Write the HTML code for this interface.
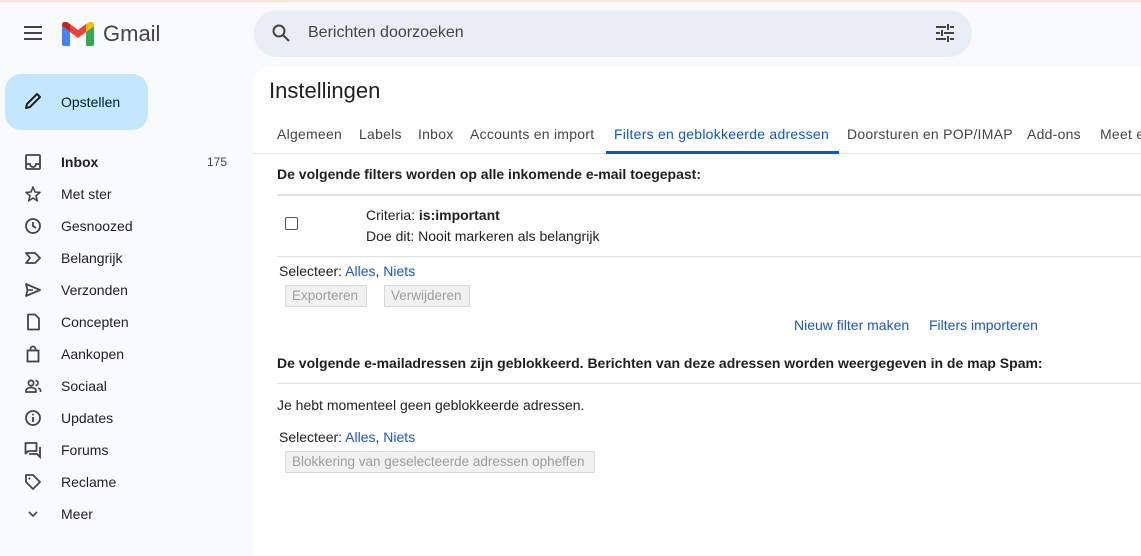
<!DOCTYPE html>
<html><head><meta charset="utf-8"><style>
*{margin:0;padding:0;box-sizing:border-box}
body{width:1141px;height:546px;overflow:hidden;background:#f8fafd;font-family:"Liberation Sans",Arial,sans-serif;color:#1f1f1f;position:relative}
.a{position:absolute;white-space:nowrap}
.nav{font-size:14px;color:#1f1f1f}
.ic{position:absolute;left:24px;width:18px;height:18px}
.tab{font-size:14px;color:#444;top:126px;letter-spacing:0.25px}
.btn{position:absolute;border:1px solid #d6d6d6;background:#f1f1f1;color:#9e9e9e;font-size:13.5px;border-radius:2px;padding:2px 6px;height:22px}
a,.lk{color:#1a57c8;text-decoration:none}
.s13{font-size:14px}
</style></head><body>
<div class="a" style="left:0;top:0;width:1141px;height:2px;background:#fbe6da"></div>
<svg class="a" style="left:23px;top:25px" width="20" height="16" viewBox="0 0 20 16"><path d="M1 2h18M1 8h18M1 14h18" stroke="#444" stroke-width="2"/></svg>
<svg class="a" style="left:62px;top:22px" width="32" height="24" viewBox="0 0 32 24">
<path d="M2 24h6V10L0 4v18a2 2 0 0 0 2 2z" fill="#4285f4"/>
<path d="M24 24h6a2 2 0 0 0 2-2V4l-8 6z" fill="#34a853"/>
<path d="M24 2v8l8-6V3c0-3-3-4-5-2.5z" fill="#fbbc04"/>
<path d="M8 10V2l8 6 8-6v8l-8 6z" fill="#ea4335"/>
<path d="M0 3v1l8 6V2L5 0C3-1 0 0 0 3z" fill="#c5221f"/>
</svg>
<div class="a" style="left:103px;top:21px;font-size:22px;color:#444">Gmail</div>
<div class="a" style="left:254px;top:10px;width:718px;height:47px;background:#e9eef6;border-radius:24px"></div>
<svg class="a" style="left:271px;top:23px" width="20" height="20" viewBox="0 0 20 20"><circle cx="8" cy="8" r="5.5" stroke="#444" stroke-width="2" fill="none"/><path d="M12 12l6 6" stroke="#444" stroke-width="2"/></svg>
<div class="a" style="left:308px;top:24px;font-size:16px;color:#444">Berichten doorzoeken</div>
<svg class="a" style="left:935px;top:24px" width="20" height="18" viewBox="0 0 20 18"><path d="M1 3h10M15 3h4M13 0v6M1 9h4M9 9h10M7 6v6M1 15h10M15 15h4M13 12v6" stroke="#444" stroke-width="2"/></svg>
<div class="a" style="left:5px;top:74px;width:143px;height:56px;background:#c2e7ff;border-radius:16px"></div>
<svg class="a" style="left:23px;top:91px" width="20" height="20" viewBox="0 0 20 20"><path d="M3 17l1-4L14 3l3 3L7 16z" stroke="#1f1f1f" stroke-width="2" fill="none" stroke-linejoin="round"/></svg>
<div class="a" style="left:61px;top:94px;font-size:14px;color:#001d35">Opstellen</div>
<svg class="ic" style="top:153px" viewBox="0 0 18 18"><rect x="2" y="2" width="14" height="14" rx="1" stroke="#444" stroke-width="1.8" fill="none"/><path d="M2 11h4a3 3 0 0 0 6 0h4" stroke="#444" stroke-width="1.8" fill="none"/></svg>
<div class="a nav" style="left:61px;top:154px;font-weight:bold">Inbox</div>
<div class="a" style="left:207px;top:155px;font-size:12px;color:#444">175</div>
<svg class="ic" style="top:185px" viewBox="0 0 18 18"><path d="M9 2l2 5 5 .4-4 3.4 1.3 5L9 13l-4.3 2.8L6 10.8 2 7.4 7 7z" stroke="#444" stroke-width="1.6" fill="none" stroke-linejoin="round"/></svg>
<div class="a nav" style="left:61px;top:186px">Met ster</div>
<svg class="ic" style="top:217px" viewBox="0 0 18 18"><circle cx="9" cy="9" r="7" stroke="#444" stroke-width="1.8" fill="none"/><path d="M9 5v4l3 2" stroke="#444" stroke-width="1.8" fill="none"/></svg>
<div class="a nav" style="left:61px;top:218px">Gesnoozed</div>
<svg class="ic" style="top:249px" viewBox="0 0 18 18"><path d="M2 4h9l5 5-5 5H2l4-5z" stroke="#444" stroke-width="1.8" fill="none" stroke-linejoin="round"/></svg>
<div class="a nav" style="left:61px;top:250px">Belangrijk</div>
<svg class="ic" style="top:281px" viewBox="0 0 18 18"><path d="M2 3l14 6-14 6 1.5-6z" stroke="#444" stroke-width="1.8" fill="none" stroke-linejoin="round"/><path d="M3.5 9H9" stroke="#444" stroke-width="1.6"/></svg>
<div class="a nav" style="left:61px;top:282px">Verzonden</div>
<svg class="ic" style="top:313px" viewBox="0 0 18 18"><path d="M4 1.5h7l4 4v11H4z" stroke="#444" stroke-width="1.8" fill="none" stroke-linejoin="round"/></svg>
<div class="a nav" style="left:61px;top:314px">Concepten</div>
<svg class="ic" style="top:345px" viewBox="0 0 18 18"><rect x="3.5" y="5.5" width="11" height="11" stroke="#444" stroke-width="1.8" fill="none"/><path d="M6.5 5.5V4a2.5 2.5 0 0 1 5 0v1.5" stroke="#444" stroke-width="1.8" fill="none"/></svg>
<div class="a nav" style="left:61px;top:346px">Aankopen</div>
<svg class="ic" style="top:377px" viewBox="0 0 18 18"><circle cx="7" cy="6" r="2.6" stroke="#444" stroke-width="1.7" fill="none"/><path d="M2 15v-1.5c0-2 3-3 5-3s5 1 5 3V15zM11.5 3.5a2.5 2.5 0 0 1 0 5M14 11c1.5.5 2.5 1.3 2.5 2.5V15" stroke="#444" stroke-width="1.7" fill="none"/></svg>
<div class="a nav" style="left:61px;top:378px">Sociaal</div>
<svg class="ic" style="top:409px" viewBox="0 0 18 18"><circle cx="9" cy="9" r="7" stroke="#444" stroke-width="1.8" fill="none"/><path d="M9 8v5" stroke="#444" stroke-width="1.8"/><circle cx="9" cy="5.5" r="1" fill="#444"/></svg>
<div class="a nav" style="left:61px;top:410px">Updates</div>
<svg class="ic" style="top:441px" viewBox="0 0 18 18"><path d="M1.5 2h11v8h-8l-3 2.5z" stroke="#444" stroke-width="1.8" fill="none" stroke-linejoin="round"/><path d="M5 13h8l3 3V6" stroke="#444" stroke-width="1.8" fill="none"/></svg>
<div class="a nav" style="left:61px;top:442px">Forums</div>
<svg class="ic" style="top:473px" viewBox="0 0 18 18"><path d="M2 2h7l7 7-7 7-7-7z" stroke="#444" stroke-width="1.8" fill="none" stroke-linejoin="round"/><circle cx="5.5" cy="5.5" r="1.1" fill="#444"/></svg>
<div class="a nav" style="left:61px;top:474px">Reclame</div>
<svg class="ic" style="top:505px" viewBox="0 0 18 18"><path d="M5 7l4 4 4-4" stroke="#444" stroke-width="1.6" fill="none"/></svg>
<div class="a nav" style="left:61px;top:506px">Meer</div>
<div class="a" style="left:253px;top:66px;width:900px;height:490px;background:#fff;border-radius:16px 0 0 0"></div>
<div class="a" style="left:269px;top:78px;font-size:22px;color:#1f1f1f">Instellingen</div>
<div class="a tab" style="left:277px">Algemeen</div>
<div class="a tab" style="left:359px">Labels</div>
<div class="a tab" style="left:418px">Inbox</div>
<div class="a tab" style="left:470px">Accounts en import</div>
<div class="a tab" style="left:614px;color:#0b57d0">Filters en geblokkeerde adressen</div>
<div class="a tab" style="left:847px">Doorsturen en POP/IMAP</div>
<div class="a tab" style="left:1027px">Add-ons</div>
<div class="a tab" style="left:1100px">Meet e</div>
<div class="a" style="left:253px;top:153px;width:900px;height:1px;background:#e6e6e6"></div>
<div class="a" style="left:606px;top:151px;width:233px;height:3px;background:#0b57d0"></div>
<div class="a s13" style="left:277px;top:166px;font-weight:bold">De volgende filters worden op alle inkomende e-mail toegepast:</div>
<div class="a" style="left:277px;top:194px;width:870px;height:2px;background:#e3e3e3"></div>
<div class="a" style="left:285px;top:217px;width:13px;height:13px;border:1px solid #555;border-radius:2px;background:#fff"></div>
<div class="a s13" style="left:366px;top:207px">Criteria: <b>is:important</b></div>
<div class="a s13" style="left:366px;top:228px">Doe dit: Nooit markeren als belangrijk</div>
<div class="a" style="left:277px;top:256px;width:870px;height:1px;background:#e3e3e3"></div>
<div class="a s13" style="left:279px;top:263px">Selecteer: <span class="lk">Alles</span>, <span class="lk">Niets</span></div>
<div class="btn" style="left:285px;top:285px;width:82px">Exporteren</div>
<div class="btn" style="left:384px;top:285px;width:86px">Verwijderen</div>
<div class="a s13 lk" style="left:794px;top:317px">Nieuw filter maken</div>
<div class="a s13 lk" style="left:929px;top:317px">Filters importeren</div>
<div class="a s13" style="left:277px;top:355px;font-weight:bold">De volgende e-mailadressen zijn geblokkeerd. Berichten van deze adressen worden weergegeven in de map Spam:</div>
<div class="a" style="left:277px;top:383px;width:870px;height:1px;background:#e3e3e3"></div>
<div class="a s13" style="left:277px;top:397px">Je hebt momenteel geen geblokkeerde adressen.</div>
<div class="a s13" style="left:279px;top:429px">Selecteer: <span class="lk">Alles</span>, <span class="lk">Niets</span></div>
<div class="btn" style="left:285px;top:451px;width:310px">Blokkering van geselecteerde adressen opheffen</div>
</body></html>
